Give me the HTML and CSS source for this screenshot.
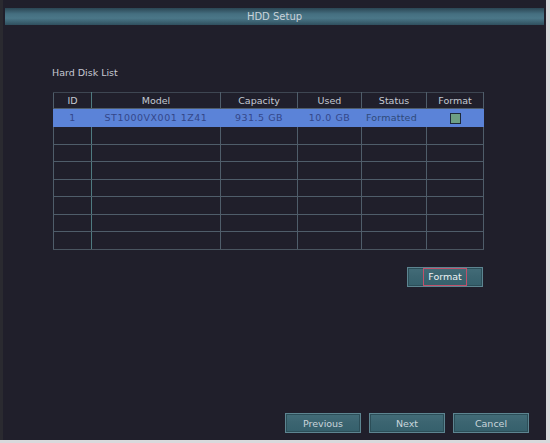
FILE: index.html
```html
<!DOCTYPE html>
<html>
<head>
<meta charset="utf-8">
<link rel="stylesheet" href="styles.css">
</head>
<body>
<div class="screen">
  <div class="titlebar">HDD Setup</div>
  <div class="content">
    <div class="section-label">Hard Disk List</div>
    <table class="disk-table">
      <colgroup>
        <col class="c-id"><col class="c-model"><col class="c-cap"><col class="c-used"><col class="c-status"><col class="c-format">
      </colgroup>
      <thead>
        <tr><th>ID</th><th>Model</th><th>Capacity</th><th>Used</th><th>Status</th><th>Format</th></tr>
      </thead>
      <tbody>
        <tr class="selected"><td>1</td><td>ST1000VX001 1Z41</td><td>931.5 GB</td><td>10.0 GB</td><td class="status">Formatted</td><td><span class="checkbox"></span></td></tr>
        <tr><td></td><td></td><td></td><td></td><td></td><td></td></tr>
        <tr><td></td><td></td><td></td><td></td><td></td><td></td></tr>
        <tr><td></td><td></td><td></td><td></td><td></td><td></td></tr>
        <tr><td></td><td></td><td></td><td></td><td></td><td></td></tr>
        <tr><td></td><td></td><td></td><td></td><td></td><td></td></tr>
        <tr><td></td><td></td><td></td><td></td><td></td><td></td></tr>
        <tr><td></td><td></td><td></td><td></td><td></td><td></td></tr>
      </tbody>
    </table>
    <div class="format-row">
      <button class="btn btn-format"><span class="focus">Format</span></button>
    </div>
  </div>
  <div class="footer">
    <button class="btn">Previous</button>
    <button class="btn">Next</button>
    <button class="btn">Cancel</button>
  </div>
</div>
</body>
</html>
```

FILE: styles.css
```css
html, body {
  margin: 0;
  padding: 0;
}
body {
  width: 550px;
  height: 443px;
  background: #d9d9dc;
  font-family: "DejaVu Sans", "Liberation Sans", sans-serif;
  overflow: hidden;
}
.screen {
  width: 546px;
  height: 440px;
  background: #201f2b;
  display: flex;
  flex-direction: column;
  box-sizing: border-box;
  border-left: 3px solid #2a2a30;
}
.titlebar {
  margin: 8px 2px 0 2px;
  height: 17px;
  line-height: 17px;
  text-align: center;
  font-size: 10px;
  color: #c9d2da;
  background: linear-gradient(to bottom, #2b4654 0%, #456f80 35%, #4b7788 60%, #2f4f5e 100%);
}
.content {
  padding-left: 50px;
  width: 430px;
}
.section-label {
  margin-top: 41px;
  font-size: 9.5px;
  line-height: 14px;
  color: #c6c8d2;
  margin-left: -1px;
}
.disk-table {
  margin-top: 12px;
  width: 430px;
  border-collapse: collapse;
  table-layout: fixed;
  font-size: 9.5px;
}
.c-id { width: 38px; }
.c-model { width: 129px; }
.c-cap { width: 77px; }
.c-used { width: 64px; }
.c-status { width: 65px; }
.c-format { width: 57px; }
.disk-table th,
.disk-table td {
  border: 1px solid #4f5d6a;
  padding: 0;
  text-align: center;
  height: 16.5px;
}
.disk-table th {
  height: 15px;
  font-weight: normal;
  color: #c4c9d2;
  border-top-color: #3e4652;
}
.disk-table th:first-child,
.disk-table td:first-child {
  border-right-color: #4f7a80;
}
.disk-table tbody tr:last-child td {
  border-bottom-color: #4a5560;
}
.disk-table tr.selected td {
  background: #5b83d8;
  color: #34478a;
  height: 17px;
  border-color: #5b83d8;
  letter-spacing: 0.5px;
}
.disk-table tr.selected td.status {
  text-align: left;
  padding-left: 4px;
  color: #2f4a7a;
  letter-spacing: 0.2px;
}
.checkbox {
  display: inline-block;
  width: 9px;
  height: 9px;
  background: #6d9f84;
  border: 1.5px solid #1d2a3a;
  vertical-align: middle;
}
.format-row {
  display: flex;
  justify-content: flex-end;
  margin-top: 17px;
}
.btn {
  width: 76px;
  height: 20px;
  padding: 0;
  font-family: "DejaVu Sans", "Liberation Sans", sans-serif;
  font-size: 9.5px;
  color: #c9d5dc;
  background: linear-gradient(to bottom, #436c78 0%, #3b6470 50%, #35606c 100%);
  border: 1px solid #5d8591;
  box-shadow: inset 0 0 0 1px #2c4e58;
}
.btn-format {
  width: 76px;
}
.focus {
  display: inline-block;
  padding: 1px 4px;
  line-height: 14px;
  border: 1.5px solid #c0506a;
  color: #eef2f4;
}
.footer {
  margin-top: auto;
  margin-bottom: 7px;
  display: flex;
  justify-content: flex-end;
  gap: 8px;
  padding-right: 17px;
}
```
